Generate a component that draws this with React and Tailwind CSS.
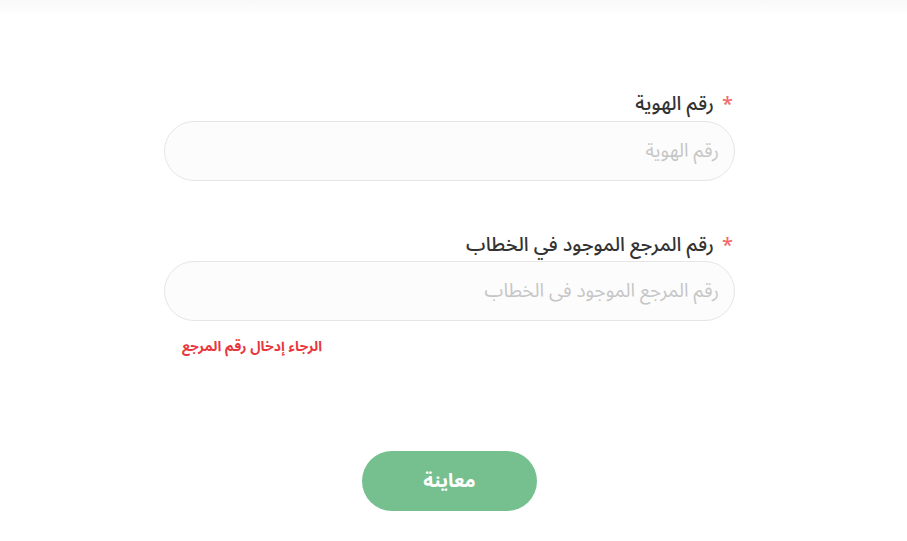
export default function App() {
  return (
    <div
      dir="rtl"
      className="min-h-screen bg-white"
      style={{ fontFamily: '"Noto Sans Arabic", "Noto Sans", "DejaVu Sans", sans-serif' }}
    >
      <div className="h-[14px] bg-gradient-to-b from-[#f9f9f9] to-[#fefefe]" />

      <div className="flex justify-center pr-[8px]">
        <form className="w-[571px] pt-[78px]">
          <div className="mb-[52px]">
            <label className="flex items-center gap-[8px] h-[24px] pr-[2px] mb-[5px] text-[19.6px] text-[#333] font-medium">
              <span className="text-[#f46a6a] text-[20px] leading-none pt-[2px]">*</span>
              <span>رقم الهوية</span>
            </label>
            <input
              type="text"
              placeholder="رقم الهوية"
              className="w-full h-[60px] rounded-full border border-[#e6e6e6] bg-[#fcfcfc] px-[15px] text-[19px] text-[#333] placeholder:text-[#c6c6c6] outline-none"
            />
          </div>

          <div>
            <label className="flex items-center gap-[8px] h-[24px] pr-[2px] mb-[4px] text-[19.6px] text-[#333] font-medium">
              <span className="text-[#f46a6a] text-[20px] leading-none pt-[2px]">*</span>
              <span>رقم المرجع الموجود في الخطاب</span>
            </label>
            <input
              type="text"
              placeholder="رقم المرجع الموجود فى الخطاب"
              className="w-full h-[60px] rounded-full border border-[#e6e6e6] bg-[#fcfcfc] px-[15px] text-[19px] text-[#333] placeholder:text-[#c6c6c6] outline-none"
            />
            <p dir="ltr" className="mt-[17px] pl-[18px] h-[18px] leading-[18px] text-[14px] font-bold text-[#e8383d] text-left">
              <span dir="rtl">الرجاء إدخال رقم المرجع</span>
            </p>
          </div>

          <div className="flex justify-center mt-[95px]">
            <button
              type="button"
              className="w-[175px] h-[60px] rounded-full bg-[#76c08f] text-white text-[19px] font-bold"
            >
              معاينة
            </button>
          </div>
        </form>
      </div>
    </div>
  );
}
